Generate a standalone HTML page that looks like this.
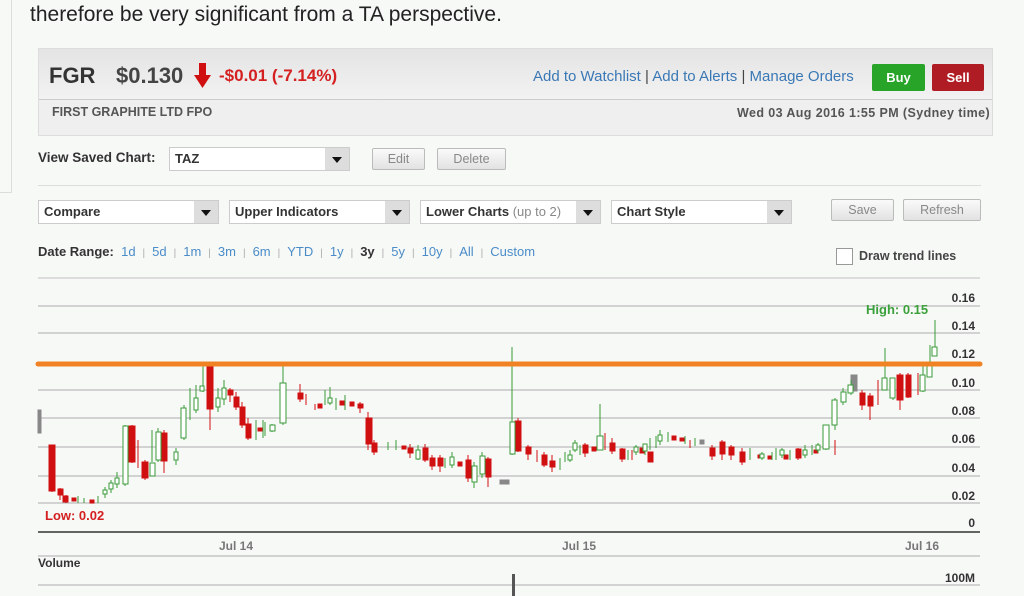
<!DOCTYPE html>
<html><head><meta charset="utf-8"><style>
body{margin:0;width:1024px;height:596px;overflow:hidden;background:#f7f9f7;font-family:"Liberation Sans",Arial,sans-serif;position:relative}
.a{position:absolute}
.lnk{color:#3a78b5}
.sel{position:absolute;height:24px;border:1px solid #ccc;background:#fff;font-size:13px;font-weight:bold;color:#333;box-sizing:border-box;line-height:22px;padding-left:5px}
.sel i{position:absolute;right:0;top:0;width:24px;height:22px;background:#ddd}
.sel i:after{content:"";position:absolute;left:7px;top:9px;border:5px solid transparent;border-top:6px solid #111;border-bottom:0}
.btn{position:absolute;height:22px;border:1px solid #bbb;border-radius:2px;background:linear-gradient(#fafafa,#e2e2e2);color:#888;font-size:12.5px;text-align:center;line-height:20px;box-sizing:border-box}
.dr{font-size:13px;color:#4a8cc8}
.dr b{color:#333}
.dr s{text-decoration:none;color:#aaa;padding:0 7px;font-size:10px}
</style></head><body>
<div class="a" style="left:0;top:0;width:11px;height:192px;border-right:1px solid #ddd;border-bottom:1px solid #ddd"></div>
<div class="a" style="left:30px;top:3px;font-size:21px;color:#222;line-height:24px">therefore be very significant from a TA perspective.</div>
<div class="a" style="left:38px;top:48px;width:953px;height:86px;border:1px solid #ddd;background:#efefef"></div>
<div class="a" style="left:39px;top:49px;width:953px;height:50px;background:linear-gradient(#e4e4e4,#f2f2f2);border-bottom:1px solid #ccc"></div>
<div class="a" style="left:49px;top:63px;font-size:22px;font-weight:bold;color:#333">FGR</div>
<div class="a" style="left:116px;top:63px;font-size:22px;font-weight:bold;color:#444">$0.130</div>
<svg class="a" style="left:193px;top:63px" width="20" height="26"><rect x="6" y="0" width="7" height="14" fill="#d01010"/><path d="M1 12 L18 12 L9.5 25Z" fill="#d01010"/></svg>
<div class="a" style="left:219px;top:66px;font-size:17px;font-weight:bold;color:#d42020">-$0.01 (-7.14%)</div>
<div class="a lnk" style="left:533px;top:68px;font-size:15px">Add to Watchlist <span style="color:#444">|</span> Add to Alerts <span style="color:#444">|</span> Manage Orders</div>
<div class="a" style="left:872px;top:64px;width:53px;height:27px;background:#28a428;border-radius:2px;color:#fff;font-weight:bold;font-size:13px;text-align:center;line-height:27px">Buy</div>
<div class="a" style="left:932px;top:64px;width:52px;height:27px;background:#b01c24;border-radius:2px;color:#fff;font-weight:bold;font-size:13px;text-align:center;line-height:27px">Sell</div>
<div class="a" style="left:52px;top:105px;font-size:12.5px;font-weight:bold;color:#555">FIRST GRAPHITE LTD FPO</div>
<div class="a" style="left:737px;top:106px;font-size:12.5px;font-weight:bold;color:#555;letter-spacing:0.4px">Wed 03 Aug 2016 1:55 PM (Sydney time)</div>
<div class="a" style="left:38px;top:150px;font-size:13.5px;font-weight:bold;color:#333">View Saved Chart:</div>
<div class="sel" style="left:169px;top:147px;width:181px;font-size:13px">TAZ<i></i></div>
<div class="btn" style="left:372px;top:148px;width:53px">Edit</div>
<div class="btn" style="left:437px;top:148px;width:69px">Delete</div>
<div class="a" style="left:38px;top:185px;width:943px;border-top:1px solid #ddd"></div>
<div class="sel" style="left:38px;top:200px;width:181px">Compare<i></i></div>
<div class="sel" style="left:229px;top:200px;width:181px">Upper Indicators<i></i></div>
<div class="sel" style="left:420px;top:200px;width:181px">Lower Charts <span style="font-weight:normal;color:#888">(up to 2)</span><i></i></div>
<div class="sel" style="left:611px;top:200px;width:181px">Chart Style<i></i></div>
<div class="btn" style="left:831px;top:199px;width:63px">Save</div>
<div class="btn" style="left:903px;top:199px;width:78px">Refresh</div>
<div class="a dr" style="left:38px;top:244px"><b>Date Range:</b>&nbsp; 1d<s>|</s>5d<s>|</s>1m<s>|</s>3m<s>|</s>6m<s>|</s>YTD<s>|</s>1y<s>|</s><b>3y</b><s>|</s>5y<s>|</s>10y<s>|</s>All<s>|</s>Custom</div>
<div class="a" style="left:836px;top:248px;width:15px;height:15px;border:1px solid #999;background:#fff"></div>
<div class="a" style="left:859px;top:249px;font-size:12.5px;font-weight:bold;color:#444">Draw trend lines</div>
<svg class="a" style="left:0;top:275px" width="1024" height="321" viewBox="0 275 1024 321">
<g stroke="#bbb" stroke-width="1.2">
<line x1="38" y1="278" x2="980" y2="278" stroke="#ccc"/>
<line x1="38" y1="306" x2="980" y2="306"/><line x1="38" y1="333" x2="980" y2="333"/><line x1="38" y1="390" x2="980" y2="390"/><line x1="38" y1="418" x2="980" y2="418"/><line x1="38" y1="447" x2="980" y2="447"/><line x1="38" y1="476" x2="980" y2="476"/><line x1="38" y1="503" x2="980" y2="503"/><line x1="38" y1="556" x2="980" y2="556"/><line x1="38" y1="585" x2="980" y2="585"/>
</g>
<line x1="38" y1="532" x2="980" y2="532" stroke="#333" stroke-width="1.5"/>
<g stroke="#d01010" fill="#d01010" stroke-width="1">
<path d="M52 445V492M60 488V500M66 495V503M132 425V463M138 440V468M145 460V480M164 430V473M210 364V430M230 388V402M236 392V410M242 402V428M248 418V440M300 384V402M306 394V405M315 404V410M360 402V413M368 412V450M374 440V455M410 444V458M425 444V462M432 455V470M440 455V472M468 455V482M488 457V487M518 418V452M528 445V460M537 450V462M544 452V467M552 455V472M585 443V457M605 433V450M612 438V454M622 448V462M632 450V460M690 440V448M712 445V460M722 440V460M731 445V460M742 448V465M798 448V460M835 440V455M862 390V410M870 393V420M878 380V405M900 373V410M908 373V398M918 373V395"/>
<rect x="49" y="445" width="6" height="46"/><rect x="58" y="489" width="5" height="6"/><rect x="63" y="496" width="5" height="6"/><rect x="129" y="426" width="6" height="36"/><rect x="142" y="462" width="6" height="16"/><rect x="161" y="433" width="6" height="28"/><rect x="207" y="365" width="6" height="44"/><rect x="228" y="390" width="5" height="5"/><rect x="234" y="397" width="5" height="10"/><rect x="240" y="407" width="5" height="18"/><rect x="246" y="424" width="5" height="14"/><rect x="298" y="393" width="5" height="6"/><rect x="358" y="404" width="5" height="4"/><rect x="366" y="418" width="6" height="26"/><rect x="372" y="443" width="5" height="9"/><rect x="408" y="448" width="5" height="5"/><rect x="423" y="448" width="5" height="12"/><rect x="430" y="458" width="5" height="8"/><rect x="438" y="458" width="5" height="8"/><rect x="466" y="460" width="5" height="18"/><rect x="486" y="459" width="5" height="18"/><rect x="515" y="421" width="6" height="30"/><rect x="526" y="447" width="5" height="7"/><rect x="542" y="455" width="5" height="10"/><rect x="550" y="461" width="5" height="6"/><rect x="583" y="445" width="5" height="8"/><rect x="610" y="443" width="5" height="8"/><rect x="620" y="449" width="5" height="10"/><rect x="710" y="448" width="5" height="8"/><rect x="720" y="442" width="5" height="12"/><rect x="729" y="447" width="5" height="8"/><rect x="740" y="452" width="5" height="10"/><rect x="796" y="449" width="5" height="9"/><rect x="860" y="393" width="5" height="12"/><rect x="868" y="396" width="5" height="10"/><rect x="897" y="375" width="6" height="25"/><rect x="906" y="375" width="5" height="22"/>
<rect x="72" y="498" width="4" height="3"/><rect x="90" y="500" width="4" height="3"/><rect x="258" y="428" width="4" height="3"/><rect x="318" y="404" width="4" height="4"/><rect x="340" y="401" width="4" height="4"/><rect x="350" y="402" width="4" height="4"/><rect x="402" y="446" width="4" height="3"/><rect x="458" y="462" width="4" height="4"/><rect x="592" y="447" width="4" height="4"/><rect x="640" y="448" width="4" height="5"/><rect x="672" y="436" width="4" height="4"/><rect x="680" y="438" width="4" height="3"/><rect x="648" y="452" width="5" height="10"/><rect x="758" y="455" width="4" height="3"/><rect x="768" y="456" width="4" height="3"/><rect x="784" y="455" width="4" height="4"/><rect x="814" y="450" width="4" height="3"/></g>
<g stroke="#888" fill="#888"><rect x="851" y="375" width="6" height="16"/><rect x="500" y="480" width="4" height="4"/><rect x="505" y="480" width="4" height="4"/><rect x="38" y="410" width="3" height="23"/><rect x="700" y="440" width="4" height="4"/></g>
<g stroke="#3a9a3a" fill="#fff" stroke-width="1">
<path d="M105 487V498M111 480V493M117 472V488M125 425V486M152 430V462M158 428V462M176 448V465M184 405V440M190 388V420M196 385V413M203 362V392M218 388V412M224 380V405M256 420V440M263 420V438M272 424V432M283 365V425M325 390V405M330 387V405M345 395V410M396 440V450M418 445V460M452 452V468M474 462V488M482 452V478M512 347V455M560 458V470M570 450V462M575 440V452M600 404V450M650 438V450M660 430V445M668 432V442M776 448V460M790 450V460M805 445V458M826 425V450M835 398V430M843 388V405M851 380V395M885 348V390M893 378V400M923 365V392M930 345V362M935 320V355M78 496V503M84 498V503M98 496V503M265 422V436M336 398V410M388 442V450M445 458V468M565 452V462M580 445V455M628 450V460M636 445V455M645 445V455M656 436V448M685 436V444M695 438V446M750 448V460M762 452V460M772 452V460M782 448V458M812 445V455M818 443V453"/>
<rect x="103" y="490" width="4" height="4"/><rect x="109" y="483" width="4" height="6"/><rect x="115" y="478" width="4" height="6"/><rect x="123" y="426" width="5" height="58"/><rect x="150" y="463" width="5" height="13"/><rect x="156" y="432" width="5" height="28"/><rect x="174" y="452" width="4" height="8"/><rect x="181" y="408" width="5" height="30"/><rect x="194" y="398" width="4" height="12"/><rect x="200" y="386" width="4" height="5"/><rect x="216" y="398" width="4" height="9"/><rect x="222" y="388" width="4" height="11"/><rect x="270" y="425" width="5" height="6"/><rect x="280" y="383" width="6" height="40"/><rect x="328" y="398" width="4" height="5"/><rect x="416" y="450" width="4" height="9"/><rect x="450" y="457" width="4" height="8"/><rect x="472" y="466" width="5" height="16"/><rect x="480" y="456" width="5" height="18"/><rect x="510" y="422" width="5" height="32"/><rect x="568" y="455" width="4" height="5"/><rect x="573" y="443" width="4" height="7"/><rect x="597" y="436" width="6" height="14"/><rect x="658" y="435" width="4" height="6"/><rect x="803" y="450" width="4" height="5"/><rect x="823" y="425" width="6" height="24"/><rect x="832" y="400" width="5" height="25"/><rect x="841" y="392" width="5" height="10"/><rect x="848" y="385" width="5" height="8"/><rect x="882" y="378" width="5" height="12"/><rect x="890" y="378" width="5" height="20"/><rect x="920" y="375" width="5" height="16"/><rect x="927" y="365" width="5" height="12"/><rect x="932" y="347" width="5" height="9"/><rect x="634" y="447" width="4" height="5"/><rect x="643" y="444" width="4" height="7"/><rect x="760" y="454" width="4" height="4"/><rect x="780" y="450" width="4" height="5"/><rect x="816" y="445" width="4" height="5"/></g>
<line x1="38" y1="364" x2="980" y2="364" stroke="#f08224" stroke-width="5" stroke-linecap="round"/>
<rect x="512" y="574" width="3" height="22" fill="#555"/>
<g font-family="Liberation Sans,Arial,sans-serif" font-weight="bold" font-size="12" fill="#333" text-anchor="end">
<text x="975" y="302">0.16</text><text x="975" y="330">0.14</text><text x="975" y="358">0.12</text><text x="975" y="387">0.10</text><text x="975" y="415">0.08</text><text x="975" y="443">0.06</text><text x="975" y="472">0.04</text><text x="975" y="500">0.02</text><text x="975" y="527">0</text><text x="975" y="582">100M</text>
</g>
<text x="866" y="314" font-family="Liberation Sans,Arial,sans-serif" font-weight="bold" font-size="13" fill="#3aa03a">High: 0.15</text>
<text x="45" y="520" font-family="Liberation Sans,Arial,sans-serif" font-weight="bold" font-size="13" fill="#d42020">Low: 0.02</text>
<g font-family="Liberation Sans,Arial,sans-serif" font-weight="bold" font-size="12" fill="#777"><text x="219" y="550">Jul 14</text><text x="562" y="550">Jul 15</text><text x="905" y="550">Jul 16</text></g>
<text x="38" y="567" font-family="Liberation Sans,Arial,sans-serif" font-weight="bold" font-size="12" fill="#333">Volume</text>
</svg>
</body></html>
